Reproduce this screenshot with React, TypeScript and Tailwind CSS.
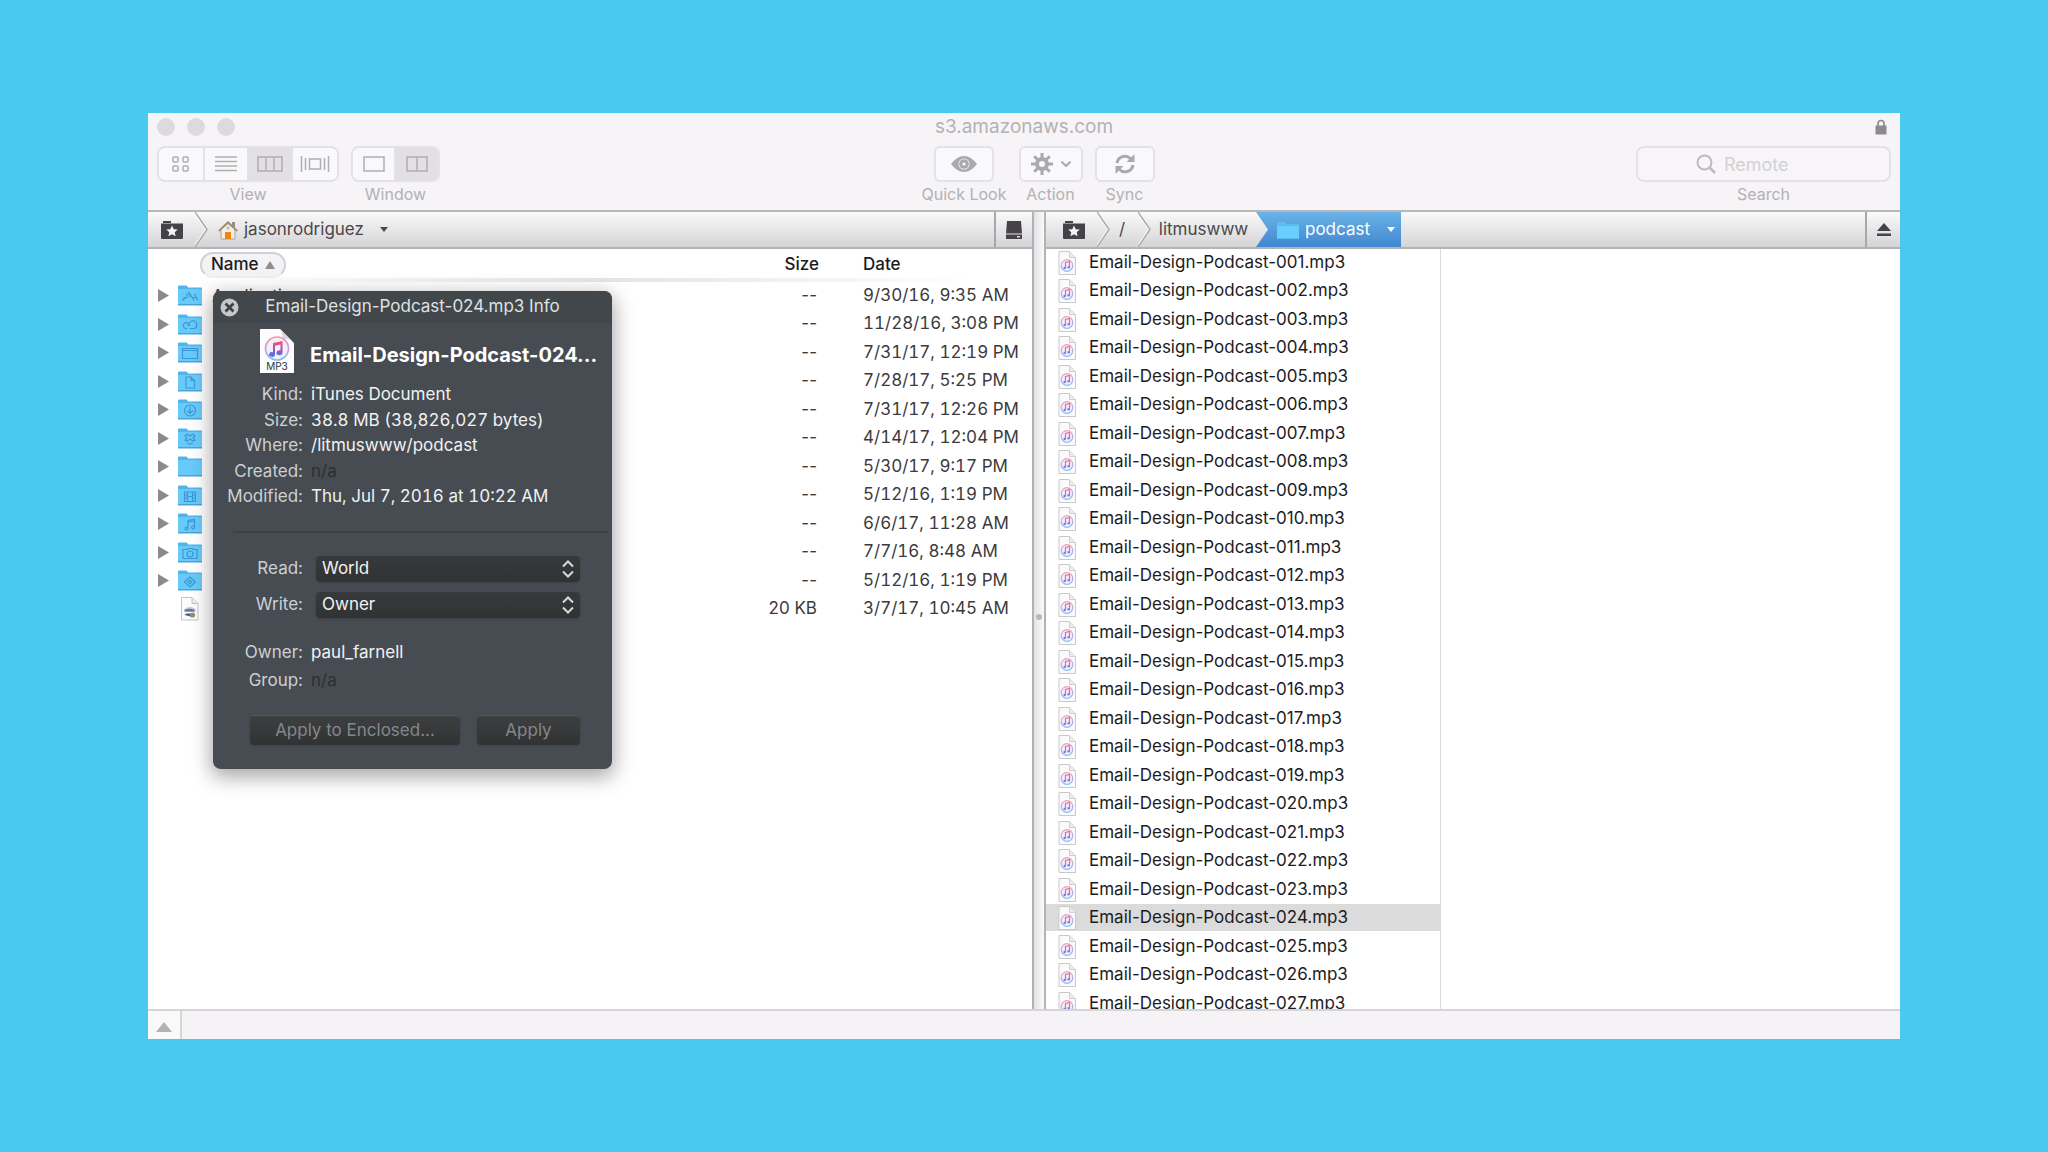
import { useState } from "react";
import type { ReactNode } from "react";

interface Entry {
  name: string;
  glyph: string;
  size: string;
  date: string;
}

const entries: Entry[] = [
  { name: "Applications", glyph: "apps", size: "--", date: "9/30/16, 9:35 AM" },
  { name: "", glyph: "cloud", size: "--", date: "11/28/16, 3:08 PM" },
  { name: "", glyph: "desktop", size: "--", date: "7/31/17, 12:19 PM" },
  { name: "", glyph: "documents", size: "--", date: "7/28/17, 5:25 PM" },
  { name: "", glyph: "downloads", size: "--", date: "7/31/17, 12:26 PM" },
  { name: "", glyph: "dropbox", size: "--", date: "4/14/17, 12:04 PM" },
  { name: "", glyph: "plain", size: "--", date: "5/30/17, 9:17 PM" },
  { name: "", glyph: "movies", size: "--", date: "5/12/16, 1:19 PM" },
  { name: "", glyph: "music", size: "--", date: "6/6/17, 11:28 AM" },
  { name: "", glyph: "pictures", size: "--", date: "7/7/16, 8:48 AM" },
  { name: "", glyph: "public", size: "--", date: "5/12/16, 1:19 PM" },
  { name: "", glyph: "file", size: "20 KB", date: "3/7/17, 10:45 AM" },
];

const podcasts = Array.from(
  { length: 27 },
  (_, i) => `Email-Design-Podcast-${String(i + 1).padStart(3, "0")}.mp3`
);

const glyphs: Record<string, ReactNode> = {
  apps: <path d="M4.500 15.500l2.500-2.500m1-1.500l3.500-4.500m-1 0l5.500 8.500m-10.500-3h4.500m4 0h5m-2.500-3.500l3 6m-6.500-6l-2 3" />,
  cloud: <path d="M9 14.500a3 3 0 1 1 1.500-5l1 2-2.500 0M11.500 9.500a3.500 3.500 0 0 1 7 1.500a3 3 0 0 1-2 3.500h-5" />,
  desktop: <path d="M4.500 6.500h15v10h-15zM4.500 8.500h15" />,
  documents: <path d="M8 6h5l3.500 3.500v7.500H8zM13 6v3.500h3.500" />,
  downloads: <path d="M12 6a5.500 5.500 0 1 1 0 11a5.500 5.500 0 1 1 0-11M12 7.500v7m-3-3l3 3l3-3" />,
  dropbox: <path d="M7 8l2-2l3 2l3-2l2 2l-2 2l2 2l-2 1l-3-2l-3 2l-2-1l2-2zM9 15l3 1l3-1" />,
  movies: <path d="M6.500 7h11v9.500h-11zM9.500 7v9.500m5-9.500v9.500M6.500 10h3m-3 3h3m5-3h3m-3 3h3m-8-1.500h5" />,
  music: <path d="M10 15.500V7.500l6.500-1v8M10 9l6.500-1M10 15.500a1.500 1.500 0 1 1-2-1.500h2M16.500 14.500a1.500 1.500 0 1 1-2-1.500h2" />,
  pictures: <path d="M5 7.500h4l1-1h4l1 1h4v9H5zM12 9a3 3 0 1 1 0 6a3 3 0 1 1 0-6M11.500 12h1" />,
  public: <path d="M12 7l5.500 5l-5.500 5l-5.500-5zM10 12l2-2l2 2l-2 2z" />,
};

function FolderIcon({ glyph }: { glyph: string }) {
  return (
    <svg viewBox="0 0 24 21" className="h-[21px] w-6 shrink-0" aria-hidden="true">
      <path d="M0 1.500Q0 .5 1 .5h7q1 0 1.500 1l.5 1h13q1 0 1 1V20H0z" fill="#51b5ea" />
      <path d="M0 4h24V19H0z" fill="#68cafa" />
      <path d="M0 19h24v1.500H0z" fill="#4ba4d4" />
      <g fill="none" stroke="#3a98d4" strokeWidth="1.200">{glyphs[glyph]}</g>
    </svg>
  );
}

function PageIcon() {
  return (
    <svg viewBox="0 0 19 24" className="h-6 w-6 shrink-0" aria-hidden="true">
      <path d="M1 .5h10.500l6 6V23H1z" fill="#fcfcfc" stroke="#c4c4c6" />
      <path d="M11.500 .5v6h6" fill="#ededed" stroke="#c4c4c6" />
      <path d="M4 12q5-4 11 0v3H4z" fill="#c3cad6" />
      <path d="M4 13q5-2.500 10 0v1.500H4z" fill="#6b75a0" />
      <path d="M4 18l6 1.500 1-3H6z" fill="#4a5590" />
      <circle cx="12" cy="18" r="2.600" fill="#8f8f78" />
    </svg>
  );
}

function Mp3Icon() {
  return (
    <svg viewBox="0 0 19 24" className="h-6 w-[19px] shrink-0" aria-hidden="true">
      <defs>
        <linearGradient id="ring" x1="0" y1="0" x2="0" y2="1">
          <stop offset="0" stopColor="#f5a3b8" />
          <stop offset="0.500" stopColor="#c9aaea" />
          <stop offset="1" stopColor="#7cbfee" />
        </linearGradient>
      </defs>
      <path d="M1 .5h10.500l6 6V23.500H1z" fill="#fafafa" stroke="#c9c9cb" />
      <path d="M11.500 .5v6h6" fill="#ececec" stroke="#cfcfd1" />
      <circle cx="9" cy="14.500" r="5.800" fill="#f3edfb" stroke="url(#ring)" strokeWidth="1.300" />
      <path d="M7.500 17v-5.500l4-1v5.500" fill="none" stroke="#dd6f9f" strokeWidth="1.200" />
      <circle cx="6.700" cy="17" r="1.300" fill="#7c82e2" />
      <circle cx="10.700" cy="16.200" r="1.300" fill="#7c82e2" />
    </svg>
  );
}

function LargeMp3Icon() {
  return (
    <svg viewBox="0 0 34 44" className="h-11 w-[34px] shrink-0" aria-hidden="true">
      <defs>
        <linearGradient id="bigRing" x1="0" y1="0" x2="0" y2="1">
          <stop offset="0" stopColor="#f9909f" />
          <stop offset="0.500" stopColor="#c79be8" />
          <stop offset="1" stopColor="#6fc2f3" />
        </linearGradient>
        <linearGradient id="note" x1="0" y1="0" x2="0" y2="1">
          <stop offset="0" stopColor="#f8556c" />
          <stop offset="0.550" stopColor="#a14dc0" />
          <stop offset="1" stopColor="#3887e6" />
        </linearGradient>
      </defs>
      <path d="M0 0h20l14 14v30H0z" fill="#fdfdfd" />
      <path d="M20 0q3 3 2 10q7-1 12 4z" fill="#d9d9dc" />
      <circle cx="17" cy="19.500" r="11.500" fill="#f3eefa" stroke="url(#bigRing)" strokeWidth="1.600" />
      <path d="M13 14l9.500-2v12a3 2.400 0 1 1-2-2.500v-6l-5.500 1.200v9a3 2.400 0 1 1-2-2.500z" fill="url(#note)" />
      <text x="17" y="41" textAnchor="middle" fontSize="10" fontFamily="Inter, sans-serif" fill="#333">
        MP3
      </text>
    </svg>
  );
}

function FavoritesIcon() {
  return (
    <svg viewBox="0 0 22 18" className="h-[18px] w-[22px]" aria-hidden="true">
      <path d="M2 0h8v2H2zM0 2.500h22V17q0 1-1 1H1q-1 0-1-1z" fill="#454347" />
      <path d="M11 4.500l1.700 3.700 4 .4-3 2.700.9 4-3.600-2.100-3.600 2.100.9-4-3-2.700 4-.4z" fill="#f4f4f4" />
    </svg>
  );
}

function HouseIcon() {
  return (
    <svg viewBox="0 0 20 20" className="size-5" aria-hidden="true">
      <path d="M14 2h3v5h-3z" fill="#9b8b7b" />
      <path d="M3 9l7-7 7 7v10H3z" fill="#f3efe6" stroke="#a5a198" />
      <path d="M0 10.500L10 1l10 9.500-1.500 1L10 4 1.500 11.500z" fill="#a08d70" />
      <path d="M7 12h6v7H7z" fill="#ee8712" />
      <path d="M8.500 6.500h3v3h-3z" fill="#b9c2c6" />
    </svg>
  );
}

function Chevron({ active = false }: { active?: boolean }) {
  return (
    <svg viewBox="0 0 13 36" preserveAspectRatio="none" className="h-full w-[13px] shrink-0" aria-hidden="true">
      <defs>
        <linearGradient id="crumb" x1="0" y1="0" x2="0" y2="1">
          <stop offset="0" stopColor="#6ab2e6" />
          <stop offset="1" stopColor="#4088d0" />
        </linearGradient>
      </defs>
      {active && <path d="M0 0h13v36H0L12 18z" fill="url(#crumb)" />}
      {!active && <path d="M-1 0l12 18-12 18" fill="none" stroke="#fff" strokeWidth="1.500" />}
      {!active && <path d="M0 0l12 18L0 36" fill="none" stroke="#aaa8ab" strokeWidth="1.500" />}
    </svg>
  );
}

function Caret({ className }: { className: string }) {
  return (
    <svg viewBox="0 0 8 5" preserveAspectRatio="none" className={className} aria-hidden="true">
      <path d="M0 0h8L4 5z" fill="currentColor" />
    </svg>
  );
}

interface SegmentProps {
  label: string;
  width: string;
  active?: boolean;
  children: ReactNode;
}

function Segment({ label, width, active, children }: SegmentProps) {
  return (
    <button
      aria-label={label}
      aria-pressed={active}
      className={`flex h-full items-center justify-center border-r-2 border-[#e4e2e4] last:border-r-0 ${width} ${
        active ? "bg-[#e2e0e2]" : "bg-[#f9f8fa]"
      }`}
    >
      <svg viewBox="0 0 30 18" className="h-[18px] w-[30px]" fill="none" stroke="#b0aeb0" strokeWidth="1.500" aria-hidden="true">
        {children}
      </svg>
    </button>
  );
}

function ToolButton({ label, width, children }: { label: string; width: string; children: ReactNode }) {
  return (
    <div className="flex flex-col items-center">
      <button
        aria-label={label}
        className={`flex h-9 items-center justify-center gap-2 rounded-md border-2 border-[#e4e2e4] bg-[#f9f8fa] text-[#aba9ac] ${width}`}
      >
        {children}
      </button>
      <span className="text-base leading-6">{label}</span>
    </div>
  );
}

function Toolbar() {
  return (
    <header className="border-b-2 border-[#b9b7ba] bg-[#f6f4f6] text-[#b3b1b4]">
      <div className="relative flex h-[33px] items-center gap-3 px-[9px] pb-[5px]">
        <span className="size-[18px] rounded-full bg-[#dcdadc]" />
        <span className="size-[18px] rounded-full bg-[#dcdadc]" />
        <span className="size-[18px] rounded-full bg-[#dcdadc]" />
        <h1 className="absolute inset-x-0 text-center text-[19px] leading-7 text-[#b3b1b4]">s3.amazonaws.com</h1>
        <svg viewBox="0 0 12 16" className="mr-1 ml-auto h-4 w-3" aria-label="Secure connection">
          <path d="M3 7V4.500a3 3 0 0 1 6 0V7" fill="none" stroke="#8c8a8d" strokeWidth="1.700" />
          <path d="M.5 6.500h11V15q0 .5-.5.5H1q-.5 0-.5-.5z" fill="#8c8a8d" />
        </svg>
      </div>
      <div className="flex justify-between px-[9px] pb-1">
        <div className="flex gap-3">
          <div className="text-center">
            <div className="flex h-9 overflow-hidden rounded-lg border-2 border-[#e4e2e4]">
              <Segment label="Icons" width="w-[46px]">
                <rect x="7" y="2" width="5" height="5" rx="1" />
                <rect x="17" y="2" width="5" height="5" rx="1" />
                <rect x="7" y="11" width="5" height="5" rx="1" />
                <rect x="17" y="11" width="5" height="5" rx="1" />
              </Segment>
              <Segment label="List" width="w-11">
                <path d="M4 2h22M4 6.500h22M4 11h22M4 15.500h22" />
              </Segment>
              <Segment label="Columns" width="w-11" active>
                <path d="M3 2h24v14H3zM11 2v14M19 2v14" />
              </Segment>
              <Segment label="Cover Flow" width="w-11">
                <path d="M1.500 1v16M5.500 3v12M9.500 4h11v10h-11zM24.500 3v12M28.500 1v16" />
              </Segment>
            </div>
            <span className="block text-base leading-6">View</span>
          </div>
          <div className="text-center">
            <div className="flex h-9 overflow-hidden rounded-lg border-2 border-[#e4e2e4]">
              <Segment label="Single pane" width="w-[43px]">
                <path d="M5 2h20v14H5z" />
              </Segment>
              <Segment label="Two panes" width="w-[42px]" active>
                <path d="M5 2h20v14H5zM15 2v14" />
              </Segment>
            </div>
            <span className="block text-base leading-6">Window</span>
          </div>
        </div>

        <div className="flex gap-3">
          <ToolButton label="Quick Look" width="w-[60px]">
            <svg viewBox="0 0 26 16" className="h-4 w-[26px]" aria-hidden="true">
              <path d="M0 8Q6 0 13 0t13 8q-6 8-13 8T0 8z" fill="currentColor" />
              <circle cx="13" cy="8" r="5.500" fill="#f9f8fa" />
              <circle cx="13" cy="8" r="4.800" fill="currentColor" />
              <circle cx="13" cy="8" r="1.600" fill="#f9f8fa" />
            </svg>
          </ToolButton>
          <ToolButton label="Action" width="w-16">
            <svg viewBox="0 0 22 22" className="size-[22px]" fill="none" stroke="currentColor" aria-hidden="true">
              <circle cx="11" cy="11" r="5" strokeWidth="4" />
              <path
                d="M11 0v5M11 17v5M0 11h5M17 11h5M3.200 3.200l3.600 3.600M15.200 15.200l3.600 3.600M3.200 18.800l3.600-3.600M15.200 6.800l3.600-3.600"
                strokeWidth="3"
              />
            </svg>
            <svg viewBox="0 0 10 6" className="h-[6px] w-[10px]" fill="none" stroke="currentColor" strokeWidth="2" aria-hidden="true">
              <path d="M.5 .5L5 5L9.500 .5" />
            </svg>
          </ToolButton>
          <ToolButton label="Sync" width="w-[60px]">
            <svg viewBox="0 0 20 20" className="size-5" fill="none" stroke="currentColor" strokeWidth="3" aria-hidden="true">
              <path d="M2 9a8 8 0 0 1 13.500-4.500M18 11a8 8 0 0 1-13.500 4.500" />
              <path d="M19.500 0v8h-8zM.5 20v-8h8z" fill="currentColor" stroke="none" />
            </svg>
          </ToolButton>
        </div>

        <div className="relative w-[255px] text-center">
          <svg
            viewBox="0 0 20 20"
            className="absolute top-2 left-[60px] size-5"
            fill="none"
            stroke="#bdbbbe"
            strokeWidth="2"
            aria-hidden="true"
          >
            <circle cx="8.500" cy="8.500" r="7" />
            <path d="M13.500 13.500l5.500 5.500" strokeWidth="2.500" />
          </svg>
          <input
            id="search"
            type="text"
            placeholder="Remote"
            className="block h-9 w-full rounded-lg border-2 border-[#e4e2e4] bg-[#f7f5f7] pt-px pl-[86px] text-lg outline-none placeholder:text-[#d3d1d4]"
          />
          <label htmlFor="search" className="block text-base leading-6">
            Search
          </label>
        </div>
      </div>
    </header>
  );
}

const pathBar =
  "flex h-[37px] items-stretch border-b-2 border-[#b4b2b5] bg-linear-to-b from-[#fafafa] to-[#d5d3d6] text-[17px] text-[#4a484b]";

function LocalPane() {
  return (
    <section className="relative min-w-0 overflow-hidden">
      <nav className={pathBar}>
        <button aria-label="Favorites" className="flex w-[47px] items-center justify-center">
          <FavoritesIcon />
        </button>
        <Chevron />
        <button className="flex items-center gap-[6px] pl-[10px]">
          <HouseIcon />
          jasonrodriguez
          <Caret className="ml-[10px] h-[5px] w-2" />
        </button>
        <button aria-label="Local disk" className="ml-auto flex w-[38px] items-center justify-center border-l-2 border-[#a9a7aa]">
          <svg viewBox="0 0 18 18" className="size-[18px]" fill="#454347" aria-hidden="true">
            <path d="M2 0h14l1 12.500H1zM1 13.500h16V18H1z" />
            <path d="M12 15h3v1.500h-3z" fill="#ddd" />
          </svg>
        </button>
      </nav>
      <div className="absolute top-[66px] right-[60px] left-[110px] h-1 bg-linear-to-r from-transparent via-[#e6e4e6] to-transparent" />
      <table className="w-full table-fixed text-[17px] text-[#3c3a3d]">
        <thead>
          <tr className="h-8 text-left text-[#1c1b1d]">
            <th className="pl-[52px] font-medium">
              <button className="relative flex h-[26px] items-center gap-[6px] rounded-full border-2 border-[#d2d0d3] border-b-[#f0eef0] bg-[#f3f2f4] px-[9px]">
                Name
                <Caret className="h-2 w-[10px] rotate-180 text-[#8f8d90]" />
              </button>
            </th>
            <th className="w-[148px] pr-11 text-right font-medium">Size</th>
            <th className="w-[169px] font-medium">Date</th>
          </tr>
        </thead>
        <tbody>
          {entries.map((e) => (
            <tr key={e.glyph} className="odd:h-[29px] even:h-7">
              <td>
                <div className="flex h-7 items-center pl-[10px] leading-7">
                  {e.glyph !== "file" ? (
                    <>
                      <svg viewBox="0 0 11 13" className="mr-[9px] h-[13px] w-[11px]" aria-hidden="true">
                        <path d="M0 0l11 6.500L0 13z" fill="#8c8a8d" />
                      </svg>
                      <FolderIcon glyph={e.glyph} />
                    </>
                  ) : (
                    <div className="pl-5">
                      <PageIcon />
                    </div>
                  )}
                  <span className="pl-[10px]">{e.name}</span>
                </div>
              </td>
              <td className="pr-[46px] text-right">{e.size}</td>
              <td className="whitespace-nowrap tabular-nums">{e.date}</td>
            </tr>
          ))}
        </tbody>
      </table>
    </section>
  );
}

function RemotePane() {
  const [selected, setSelected] = useState(23);

  return (
    <section className="flex min-w-0 flex-col overflow-hidden">
      <nav className={`${pathBar} shrink-0`}>
        <button aria-label="Favorites" className="flex w-[51px] items-center justify-center pl-1">
          <FavoritesIcon />
        </button>
        <Chevron />
        <button className="w-7 pr-1">/</button>
        <Chevron />
        <button className="w-[105px]">litmuswww</button>
        <Chevron active />
        <button className="flex w-[132px] items-center bg-linear-to-b from-[#6ab2e6] to-[#4088d0] pl-2 text-white">
          <svg viewBox="0 0 22 18" className="mr-[6px] h-[18px] w-[22px]" aria-hidden="true">
            <path d="M0 1h8l1 2h13v15H0z" fill="#5bbcf0" />
            <path d="M0 5h22v12H0z" fill="#6bcdfb" />
          </svg>
          podcast
          <Caret className="mr-[6px] ml-auto h-[5px] w-2" />
        </button>
        <button aria-label="Disconnect" className="ml-auto flex w-[35px] items-center justify-center border-l-2 border-[#a9a7aa]">
          <svg viewBox="0 0 14 14" className="size-[14px]" fill="#454347" aria-hidden="true">
            <path d="M7 0l7 8H0zM0 10.500h14V13H0z" />
          </svg>
        </button>
      </nav>
      <ul className="min-h-0 w-[395px] flex-1 overflow-hidden border-r border-[#dcdadd] text-[17px] text-[#1c1b1d]">
        {podcasts.map((name, i) => (
          <li key={name} className="odd:h-7 even:h-[29px]">
            <button
              onClick={() => setSelected(i)}
              className={`flex h-[27px] w-full items-center gap-3 pl-3 ${i === selected ? "bg-[#dbdbdc]" : ""}`}
            >
              <Mp3Icon />
              {name}
            </button>
          </li>
        ))}
      </ul>
    </section>
  );
}

function AccessSelect({ label, value }: { label: string; value: string }) {
  const id = label.toLowerCase();
  return (
    <div className="flex h-9 items-center">
      <label htmlFor={id} className="w-[90px] text-right text-[#cdd0d2]">
        {label}:
      </label>
      <div className="relative ml-[13px] w-[264px]">
        <select
          id={id}
          defaultValue={value}
          className="block h-[26px] w-full appearance-none rounded-sm bg-linear-to-b from-[#373a3c] to-[#303233] pl-[6px] text-[#f1f2f2] shadow-sm"
        >
          <option>World</option>
          <option>Owner</option>
        </select>
        <svg
          viewBox="0 0 12 18"
          className="pointer-events-none absolute top-1 right-[6px] h-[18px] w-3"
          fill="none"
          stroke="#d8dadb"
          strokeWidth="2"
          aria-hidden="true"
        >
          <path d="M1 6.500l5-5l5 5M1 11.500l5 5l5-5" />
        </svg>
      </div>
    </div>
  );
}

const info = [
  { label: "Kind", value: "iTunes Document" },
  { label: "Size", value: "38.8 MB (38,826,027 bytes)" },
  { label: "Where", value: "/litmuswww/podcast" },
  { label: "Created", value: "n/a" },
  { label: "Modified", value: "Thu, Jul 7, 2016 at 10:22 AM" },
];

function InfoPanel() {
  return (
    <aside className="absolute top-[178px] left-[65px] flex h-[478px] w-[399px] flex-col rounded-lg bg-[#464c52] text-[17px] text-[#f1f2f2] shadow-[0_6px_20px_2px_rgba(0,0,0,0.35)]">
      <div className="flex h-8 items-center rounded-t-lg bg-[#42474b] pl-[7px]">
        <button aria-label="Close" className="size-[19px]">
          <svg viewBox="0 0 19 19" className="size-[19px]" aria-hidden="true">
            <circle cx="9.500" cy="9.500" r="9" fill="#c5c7c8" />
            <path d="M5.500 5.500l8 8M13.500 5.500l-8 8" stroke="#3f4447" strokeWidth="2.800" />
          </svg>
        </button>
        <h2 className="flex-1 pr-[26px] text-center text-[#dfe1e2]">Email-Design-Podcast-024.mp3 Info</h2>
      </div>
      <div className="mt-[6px] flex h-[53px] items-start gap-4 pl-[47px]">
        <LargeMp3Icon />
        <h3 className="pt-3 text-xl leading-7 font-bold text-white">Email-Design-Podcast-024...</h3>
      </div>
      <dl className="grid h-32 auto-rows-fr grid-cols-[90px_1fr] items-center gap-x-2">
        {info.map((row) => (
          <div key={row.label} className="contents">
            <dt className="text-right text-[#cdd0d2]">{row.label}:</dt>
            <dd className={row.value === "n/a" ? "text-[#2b2f32]" : "tabular-nums"}>{row.value}</dd>
          </div>
        ))}
      </dl>
      <hr className="mt-[21px] mr-1 ml-5 border-t-2 border-[#3c4145]" />
      <div className="mt-[18px]">
        <AccessSelect label="Read" value="World" />
        <AccessSelect label="Write" value="Owner" />
      </div>
      <dl className="mt-4 grid h-14 auto-rows-fr grid-cols-[90px_1fr] items-center gap-x-2">
        <dt className="text-right text-[#cdd0d2]">Owner:</dt>
        <dd>paul_farnell</dd>
        <dt className="text-right text-[#cdd0d2]">Group:</dt>
        <dd className="text-[#2b2f32]">n/a</dd>
      </dl>
      <div className="mt-5 flex gap-[17px] pl-[37px] text-[#85888a]">
        <button className="h-[30px] w-[210px] rounded-sm border-t border-[#55595b] bg-linear-to-b from-[#3d3f40] to-[#303233] shadow-sm">
          Apply to Enclosed...
        </button>
        <button className="h-[30px] w-[103px] rounded-sm border-t border-[#55595b] bg-linear-to-b from-[#3d3f40] to-[#303233] shadow-sm">
          Apply
        </button>
      </div>
    </aside>
  );
}

export default function App() {
  return (
    <div className="flex h-screen min-h-[900px] bg-[#4bc8f0] px-[148px] py-[113px] font-['Inter',sans-serif]">
      <main className="relative flex min-w-0 flex-1 flex-col bg-white">
        <Toolbar />
        <div className="grid min-h-0 flex-1 grid-cols-[minmax(0,884fr)_14px_minmax(0,854fr)]">
          <LocalPane />
          <div className="flex items-center justify-center border-x-2 border-[#b4b2b5] bg-linear-to-r from-[#e4e2e5] to-[#fafafa] pt-3">
            <span className="size-[6px] rounded-full bg-[#b9b7ba]" />
          </div>
          <RemotePane />
        </div>
        <footer className="flex h-[30px] border-t-2 border-[#d6d4d7] bg-[#f5f3f5]">
          <button aria-label="Show activity" className="flex w-[34px] items-center justify-center border-r-2 border-[#d6d4d7] bg-[#faf9fa] pt-1">
            <Caret className="h-[10px] w-4 rotate-180 text-[#b3b1b4]" />
          </button>
        </footer>
        <InfoPanel />
      </main>
    </div>
  );
}
